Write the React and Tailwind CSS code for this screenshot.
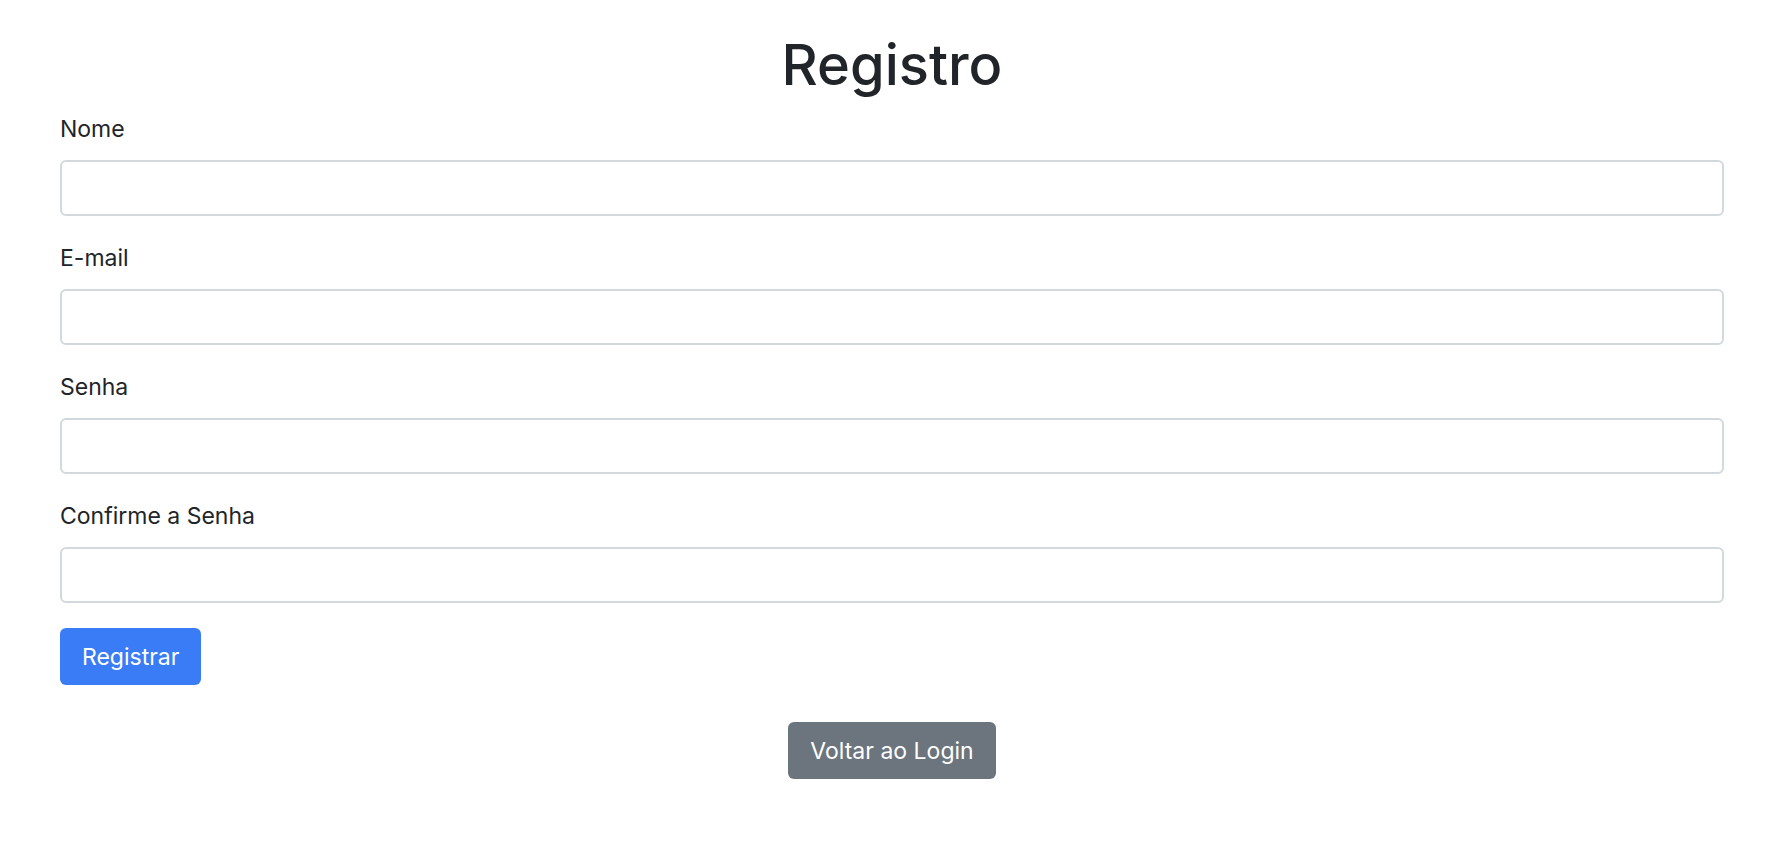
import { useState } from 'react'

const FIELDS = [
  { id: 'nome', label: 'Nome', type: 'text' },
  { id: 'email', label: 'E-mail', type: 'email' },
  { id: 'senha', label: 'Senha', type: 'password' },
  { id: 'confirma', label: 'Confirme a Senha', type: 'password' },
]

export default function App() {
  const [form, setForm] = useState({ nome: '', email: '', senha: '', confirma: '' })

  return (
    <div className="min-h-screen bg-white font-['Inter',sans-serif] text-[#212529]">
      <div className="pl-[60px] pr-[68px] pt-[32px]">
        <h1 className="text-center text-[56px] font-medium leading-[67px] mb-[13px]">Registro</h1>

        <form onSubmit={e => e.preventDefault()}>
          {FIELDS.map(f => (
            <div key={f.id} className="mb-[25px]">
              <label htmlFor={f.id} className="block text-[23px] leading-[34px] mb-[14px]">
                {f.label}
              </label>
              <input
                id={f.id}
                type={f.type}
                value={form[f.id]}
                onChange={e => setForm({ ...form, [f.id]: e.target.value })}
                className="block w-full h-[56px] px-[17px] text-[23px] bg-white border-2 border-[#d3d8dd] rounded-[6px] outline-none"
              />
            </div>
          ))}

          <button
            type="submit"
            className="h-[57px] px-[22px] flex items-center rounded-[6px] bg-[#3a7cf6] text-white text-[23px] leading-[34px]"
          >
            Registrar
          </button>
        </form>

        <div className="flex justify-center mt-[37px]">
          <button className="h-[57px] px-[22px] flex items-center rounded-[6px] bg-[#6c757d] text-white text-[23px] leading-[34px]">
            Voltar ao Login
          </button>
        </div>
      </div>
    </div>
  )
}
